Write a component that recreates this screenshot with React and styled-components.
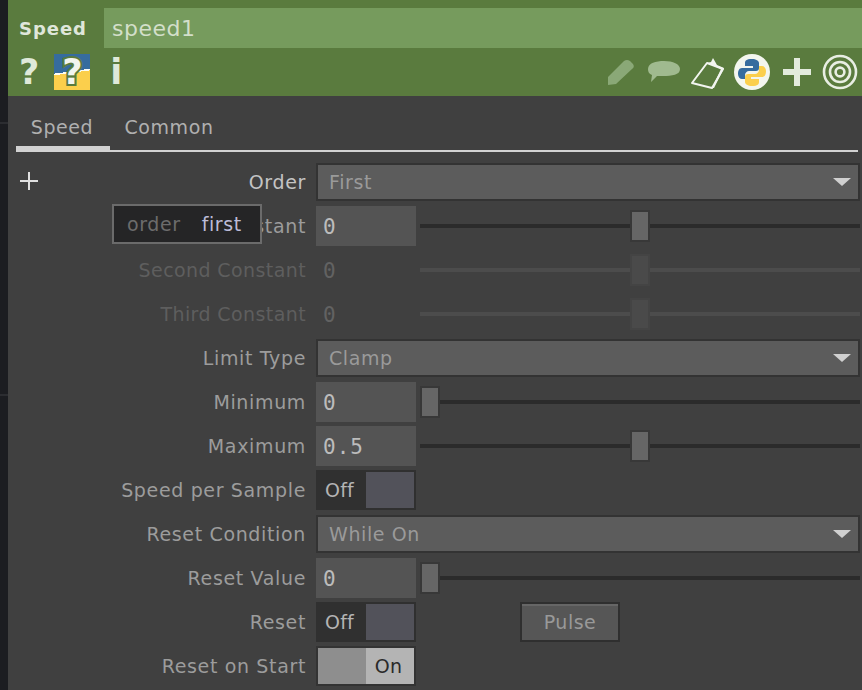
import React from 'react';
import styled, { createGlobalStyle } from 'styled-components';

const GlobalStyle = createGlobalStyle`
  html, body {
    margin: 0;
    padding: 0;
    background: #404040;
    overflow: hidden;
  }
`;

const Page = styled.div`
  display: flex;
  width: 862px;
  height: 690px;
  overflow: hidden;
  font-family: 'DejaVu Sans', sans-serif;
  font-size: 19px;
`;

const Strip = styled.div`
  width: 8px;
  flex: none;
  background: linear-gradient(
    #1c1d21 0 122px,
    #2c2d31 122px 124px,
    #1c1d21 124px 394px,
    #2c2d31 394px 396px,
    #1c1d21 396px
  );
`;

const Panel = styled.div`
  flex: 1;
  min-width: 0;
  background: #404040;
`;

const Header = styled.div`
  height: 96px;
  background: #5a7b3e;
  padding-top: 8px;
  box-sizing: border-box;
`;

const TitleRow = styled.div`
  display: flex;
  align-items: center;
  height: 40px;
`;

const OpType = styled.div`
  width: 96px;
  flex: none;
  padding-left: 11px;
  box-sizing: border-box;
  font-weight: bold;
  font-size: 18px;
  letter-spacing: 0.95px;
  color: #dfe6da;
`;

const NameField = styled.div`
  flex: 1;
  height: 40px;
  line-height: 42px;
  padding-left: 8px;
  background: #769b5d;
  font-size: 22px;
  letter-spacing: 0.5px;
  color: #d3dfca;
`;

const ToolRow = styled.div`
  display: flex;
  align-items: center;
  justify-content: space-between;
  height: 48px;
  padding: 0 4px 0 11px;
`;

const ToolGroup = styled.div`
  display: flex;
  align-items: center;
  gap: 15px;
`;

const IconBar = styled.div`
  display: flex;
  align-items: center;
`;

const IconSlot = styled.span`
  display: flex;
  margin-left: ${(p) => p.$left || 0}px;
`;

const Body = styled.div`
  position: relative;
  padding: 0 0 0 8px;
`;

const Tabs = styled.div`
  display: flex;
  height: 56px;
  margin-right: 4px;
  border-bottom: 2px solid #d2d2d2;
  box-sizing: border-box;
`;

const Tab = styled.div`
  width: ${(p) => p.$width}px;
  padding-top: 20px;
  padding-right: ${(p) => (p.$active ? '2px' : '0')};
  box-sizing: border-box;
  text-align: center;
  font-size: 19px;
  letter-spacing: 0.6px;
  color: #b0b0b0;
  border-bottom: ${(p) => (p.$active ? '6px solid #d2d2d2' : 'none')};
  height: ${(p) => (p.$active ? '56px' : '54px')};
`;

const Rows = styled.div`
  display: flex;
  flex-direction: column;
  gap: 4px;
  padding: 10px 2px 0 0;
`;

const Row = styled.div`
  display: grid;
  grid-template-columns: 290px 1fr;
  column-gap: 10px;
  height: 40px;
  align-items: center;
  position: relative;
`;

const Label = styled.div`
  text-align: right;
  white-space: nowrap;
  font-size: 19px;
  letter-spacing: ${(p) => (p.$disabled ? '0.4px' : '0.65px')};
  color: ${(p) => (p.$disabled ? '#5e5e5e' : p.$bright ? '#c4c4c4' : '#9c9c9c')};
`;

const AddButton = styled.svg`
  position: absolute;
  left: 4px;
  top: 10px;
`;

const Menu = styled.div`
  height: 38px;
  display: flex;
  align-items: center;
  justify-content: space-between;
  box-sizing: border-box;
  border: 2px solid #333;
  background: #5c5c5c;
  padding: 0 7px 0 11px;
  font-size: 19px;
  letter-spacing: 0.6px;
  color: #9a9a9a;
`;

const Caret = styled.span`
  width: 0;
  height: 0;
  border-left: 9px solid transparent;
  border-right: 9px solid transparent;
  border-top: 8px solid #d0d0d0;
`;

const ValueRow = styled.div`
  display: flex;
  align-items: center;
  gap: ${(p) => (p.$flush ? 0 : 4)}px;
`;

const Value = styled.div`
  width: 100px;
  height: 40px;
  line-height: 42px;
  flex: none;
  padding-left: 7px;
  box-sizing: border-box;
  background: ${(p) => (p.$disabled ? 'transparent' : '#545454')};
  font-family: 'DejaVu Sans Mono', monospace;
  font-size: 21px;
  letter-spacing: 1px;
  color: ${(p) => (p.$disabled ? '#626262' : '#bcbcbc')};
`;

const SliderTrack = styled.div`
  position: relative;
  flex: 1;
  height: 40px;
  &::before {
    content: '';
    position: absolute;
    left: 0;
    right: 0;
    top: 18px;
    height: 4px;
    background: ${(p) => (p.$disabled ? '#4c4c4c' : '#2b2b2b')};
  }
`;

const SliderHandle = styled.div`
  position: absolute;
  top: 4px;
  width: 20px;
  height: 32px;
  box-sizing: border-box;
  background: ${(p) => (p.$disabled ? '#4a4a4a' : '#666')};
  border: 2px solid ${(p) => (p.$disabled ? '#444' : '#383838')};
`;

const ToggleBox = styled.div`
  width: 100px;
  height: 40px;
  display: flex;
  flex: none;
  box-sizing: border-box;
  border: 2px solid ${(p) => (p.$on ? '#333' : '#303030')};
  border-left-width: ${(p) => (p.$on ? '2px' : '0')};
`;

const ToggleSide = styled.div`
  display: flex;
  align-items: center;
  justify-content: center;
  font-size: 19px;
  letter-spacing: 0.3px;
  padding-right: ${(p) => p.$shift || 0}px;
  box-sizing: border-box;
  width: ${(p) => p.$width}px;
  background: ${(p) => p.$bg};
  color: ${(p) => p.$color};
`;

const Pulse = styled.div`
  width: 100px;
  height: 40px;
  margin-left: 104px;
  display: flex;
  align-items: center;
  justify-content: center;
  flex: none;
  box-sizing: border-box;
  border: 2px solid #2f2f2f;
  background: #565656;
  box-shadow: inset 0 2px 0 #666;
  font-size: 19px;
  letter-spacing: 0.5px;
  color: #999;
`;

const Tooltip = styled.div`
  position: absolute;
  left: 104px;
  top: 108px;
  width: 150px;
  height: 40px;
  display: flex;
  align-items: center;
  gap: 21px;
  padding-left: 13px;
  box-sizing: border-box;
  background: #252526;
  border: 2px solid #6b6b6b;
  font-size: 19px;
  letter-spacing: 0.6px;
`;

const TooltipName = styled.span`
  color: #6c6c6c;
`;

const TooltipValue = styled.span`
  color: #bcbcd8;
`;

const Question = styled.span`
  font-weight: bold;
  font-size: 35px;
  line-height: 36px;
  color: #dfe9d9;
`;

const InfoMark = styled(Question)`
  margin-left: 5px;
`;

const PythonHelp = styled.div`
  width: 36px;
  height: 36px;
  text-align: center;
  line-height: 36px;
  background: linear-gradient(172deg, #366c9e 0 48%, #fdfdf5 48% 52%, #fbcf4c 52%);
  font-weight: bold;
  font-size: 35px;
  color: #f2f5ef;
  -webkit-text-stroke: 4px #5a7b3e;
  paint-order: stroke fill;
`;

const PythonLogo = () => (
  <svg width="38" height="38" viewBox="0 0 38 38">
    <circle cx="19" cy="19" r="18" fill="#f3f6ee" />
    <path d="M19 6c-6 0-7 2-7 4v3h8v2H9c-3 0-4 3-4 6s2 5 4 5h3v-4c0-2 2-4 4-4h7c2 0 3-1 3-3v-5c0-2-3-4-7-4z" fill="#366c9e" />
    <path d="M19 33c6 0 7-2 7-4v-3h-8v-2h11c3 0 4-3 4-6s-2-5-4-5h-3v4c0 2-2 4-4 4h-7c-2 0-3 1-3 3v5c0 2 3 4 7 4z" fill="#fbcf4c" />
  </svg>
);

const ToolIcons = () => (
  <IconBar>
    <IconSlot>
      <svg width="30" height="30" viewBox="0 0 30 30">
        <path d="M2 20 L18 4 Q21 2 24 4 L27 7 Q29 10 26 12 L10 27 L2 28 Z" fill="#8aa877" />
      </svg>
    </IconSlot>
    <IconSlot $left={10}>
      <svg width="36" height="28" viewBox="0 0 36 28">
        <path d="M2 11 C2 5 10 3 18 3 C27 3 34 6 34 11 C34 17 26 18 17 18 L11 18 L5 24 L6 17 C3 16 2 14 2 11 Z" fill="#a0ba8f" />
      </svg>
    </IconSlot>
    <IconSlot $left={8}>
      <svg width="36" height="36" viewBox="0 0 36 36">
        <path d="M2 29 L17 9 L33 15 L22 34 Z" fill="none" stroke="#f2f5ef" strokeWidth="2" strokeLinejoin="round" />
        <path d="M17 9 L21 8 L23 4 L27 11 L34 14 L24 34 L22 34 L31 15 Z" fill="#f2f5ef" />
      </svg>
    </IconSlot>
    <IconSlot $left={7}>
      <PythonLogo />
    </IconSlot>
    <IconSlot $left={12}>
      <svg width="28" height="28" viewBox="0 0 28 28">
        <path d="M11 0h6v11h11v6H17v11h-6V17H0v-6h11z" fill="#e3ebdd" />
      </svg>
    </IconSlot>
    <IconSlot $left={11}>
      <svg width="36" height="36" viewBox="0 0 36 36" fill="none" stroke="#e8eee3" strokeWidth="2.6">
        <circle cx="18" cy="18" r="16" />
        <circle cx="18" cy="18" r="10" />
        <circle cx="18" cy="18" r="4.4" />
      </svg>
    </IconSlot>
  </IconBar>
);

const Slider = ({ value, min, max, disabled }) => (
  <SliderTrack $disabled={disabled}>
    <SliderHandle
      $disabled={disabled}
      style={{ left: `${((value - min) / (max - min)) * 420}px` }}
    />
  </SliderTrack>
);

const NumberParam = ({ label, text, value, min, max, disabled, bright }) => (
  <Row>
    <Label $disabled={disabled} $bright={bright}>{label}</Label>
    <ValueRow>
      <Value $disabled={disabled}>{text}</Value>
      <Slider value={value} min={min} max={max} disabled={disabled} />
    </ValueRow>
  </Row>
);

const MenuParam = ({ label, text, bright, children }) => (
  <Row>
    {children}
    <Label $bright={bright}>{label}</Label>
    <Menu>
      {text}
      <Caret />
    </Menu>
  </Row>
);

const OffToggle = () => (
  <ToggleBox>
    <ToggleSide $width={50} $bg="#303030" $color="#b4b4b4" $shift={3}>Off</ToggleSide>
    <ToggleSide $width={48} $bg="#52525a" />
  </ToggleBox>
);

const App = () => {
  return (
    <Page>
      <GlobalStyle />
      <Strip />
      <Panel>
        <Header>
          <TitleRow>
            <OpType>Speed</OpType>
            <NameField>speed1</NameField>
          </TitleRow>
          <ToolRow>
            <ToolGroup>
              <Question>?</Question>
              <PythonHelp>?</PythonHelp>
              <InfoMark>i</InfoMark>
            </ToolGroup>
            <ToolIcons />
          </ToolRow>
        </Header>
        <Body>
          <Tabs>
            <Tab $active $width={94}>Speed</Tab>
            <Tab $width={118}>Common</Tab>
          </Tabs>
          <Rows>
            <MenuParam label="Order" text="First" bright>
              <AddButton width="18" height="18" viewBox="0 0 18 18">
                <path d="M0 8h18v2H0zM8 0h2v18H8z" fill="#e0e0e0" />
              </AddButton>
            </MenuParam>
            <NumberParam label="First Constant" text="0" value={0} min={-1} max={1} />
            <NumberParam label="Second Constant" text="0" value={0} min={-1} max={1} disabled />
            <NumberParam label="Third Constant" text="0" value={0} min={-1} max={1} disabled />
            <MenuParam label="Limit Type" text="Clamp" />
            <NumberParam label="Minimum" text="0" value={0} min={0} max={1} />
            <NumberParam label="Maximum" text="0.5" value={0.5} min={0} max={1} />
            <Row>
              <Label>Speed per Sample</Label>
              <OffToggle />
            </Row>
            <MenuParam label="Reset Condition" text="While On" />
            <NumberParam label="Reset Value" text="0" value={0} min={0} max={1} />
            <Row>
              <Label>Reset</Label>
              <ValueRow $flush>
                <OffToggle />
                <Pulse>Pulse</Pulse>
              </ValueRow>
            </Row>
            <Row>
              <Label>Reset on Start</Label>
              <ToggleBox $on>
                <ToggleSide $width={48} $bg="#8e8e8e" />
                <ToggleSide $width={48} $bg="#b4b4b4" $color="#2a2a2a" $shift={3}>On</ToggleSide>
              </ToggleBox>
            </Row>
          </Rows>
          <Tooltip>
            <TooltipName>order</TooltipName>
            <TooltipValue>first</TooltipValue>
          </Tooltip>
        </Body>
      </Panel>
    </Page>
  );
};

export default App;
